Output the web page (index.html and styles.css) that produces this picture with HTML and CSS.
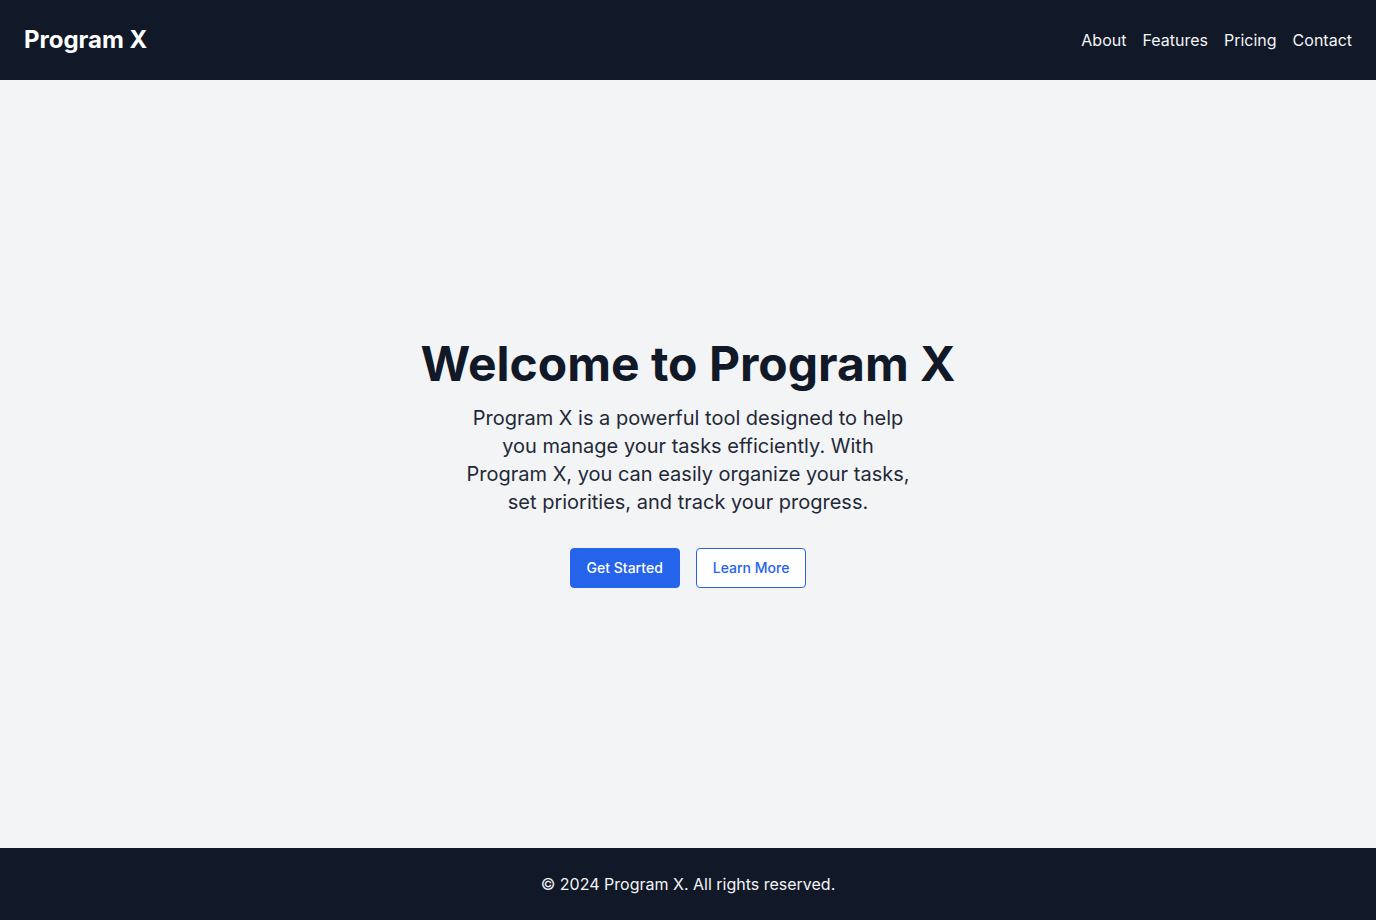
FILE: index.html
```html
<!DOCTYPE html>
<html lang="en">
<head>
<meta charset="utf-8">
<title>Program X</title>
<link rel="stylesheet" href="styles.css">
</head>
<body>
<div class="page">
  <header class="header">
    <div class="brand">Program X</div>
    <nav class="nav">
      <a href="#">About</a>
      <a href="#">Features</a>
      <a href="#">Pricing</a>
      <a href="#">Contact</a>
    </nav>
  </header>
  <main class="hero">
    <h1 class="title">Welcome to Program X</h1>
    <p class="lead">Program X is a powerful tool designed to help you manage your tasks efficiently. With Program X, you can easily organize your tasks, set priorities, and track your progress.</p>
    <div class="actions">
      <a class="btn btn-primary" href="#">Get Started</a>
      <a class="btn btn-outline" href="#">Learn More</a>
    </div>
  </main>
  <footer class="footer">© 2024 Program X. All rights reserved.</footer>
</div>
</body>
</html>
```
FILE: styles.css
```css
* { box-sizing: border-box; }
html, body { margin: 0; padding: 0; }
body {
  font-family: Inter, "Noto Sans", sans-serif;
  background: #f3f4f6;
  color: #111827;
}
.page {
  min-height: 920px;
  display: flex;
  flex-direction: column;
}
.header {
  background: #111827;
  color: #fff;
  padding: 24px;
  display: flex;
  justify-content: space-between;
  align-items: center;
  height: 80px;
}
.brand {
  font-size: 24px;
  line-height: 32px;
  font-weight: 700;
}
.nav {
  display: flex;
  gap: 16px;
}
.nav a {
  color: #f3f4f6;
  text-decoration: none;
  font-size: 16px;
  line-height: 24px;
}
.hero {
  flex: 1;
  display: flex;
  flex-direction: column;
  align-items: center;
  justify-content: center;
  text-align: center;
}
.title {
  margin: 0;
  font-size: 48px;
  line-height: 48px;
  font-weight: 700;
  color: #111827;
}
.lead {
  margin: 16px 0 0;
  max-width: 448px;
  font-size: 20px;
  line-height: 28px;
  color: #1f2937;
}
.actions {
  margin-top: 32px;
  display: flex;
  gap: 16px;
}
.btn {
  display: inline-block;
  height: 40px;
  padding: 0 16px;
  line-height: 38px;
  font-size: 14px;
  font-weight: 500;
  border-radius: 4px;
  text-decoration: none;
  border: 1px solid #2563eb;
}
.btn-primary {
  background: #2563eb;
  color: #fff;
}
.btn-outline {
  background: #fff;
  color: #2563eb;
}
.footer {
  background: #111827;
  color: #f3f4f6;
  text-align: center;
  padding: 24px;
  font-size: 16px;
  line-height: 24px;
  height: 72px;
}
```
